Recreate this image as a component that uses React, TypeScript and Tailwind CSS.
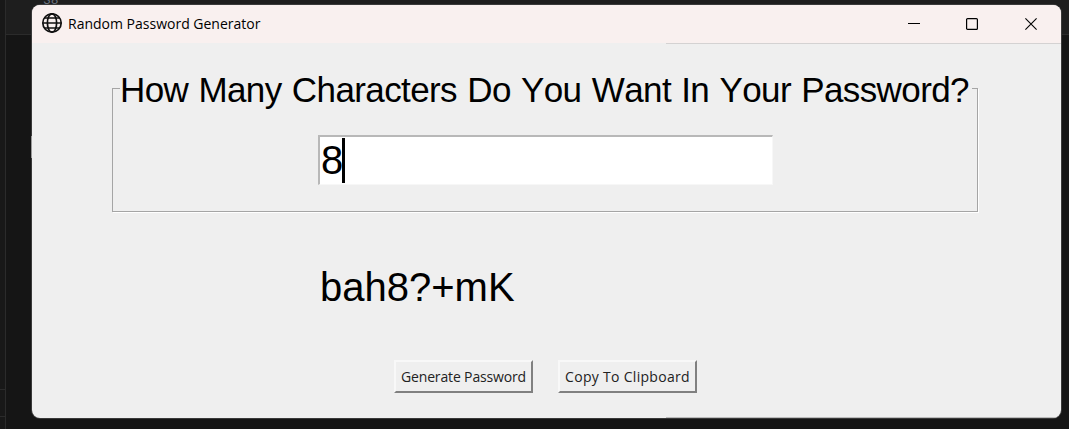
import type { ReactNode } from "react";

function GlobeIcon() {
  return (
    <svg width="22" height="22" viewBox="0 0 22 22" fill="none" stroke="#111" strokeWidth="1.7">
      <circle cx="11" cy="10" r="9.2" />
      <ellipse cx="11" cy="10" rx="4.6" ry="9.2" />
      <path d="M2 10H20M3.4 5H18.6M3.4 15H18.6" />
    </svg>
  );
}

function TitleBar() {
  return (
    <header className="flex h-[38px] shrink-0 items-center bg-[#f9f0ef] pl-[9px]">
      <GlobeIcon />
      <h1 className="mt-[-2px] ml-[5px] grow whitespace-nowrap font-['Open_Sans',sans-serif] text-[14px] text-black">
        Random Password Generator
      </h1>
      <div className="mr-[24px] flex items-center gap-[47px]">
        <svg className="mr-[-1px]" width="12" height="12" viewBox="0 0 12 12" stroke="#000" fill="none">
          <path d="M0 5.5H12" />
        </svg>
        <svg width="12" height="12" viewBox="0 0 12 12" stroke="#000" strokeWidth="1.2" fill="none">
          <rect x="0.6" y="0.6" width="10.8" height="10.8" rx="1" />
        </svg>
        <svg width="12" height="12" viewBox="0 0 12 12" stroke="#000" strokeWidth="1.1" fill="none">
          <path d="M0.4 0.4L11.6 11.6M11.6 0.4L0.4 11.6" />
        </svg>
      </div>
    </header>
  );
}

function PushButton({ children }: { children: ReactNode }) {
  return (
    <button className="flex h-[33px] w-[139px] items-center justify-center border-2 border-t-[#f8f8f8] border-r-[#808080] border-b-[#808080] border-l-[#f8f8f8] bg-[#efefef] whitespace-nowrap font-['Open_Sans',sans-serif] text-[14px] text-[#222]">
      {children}
    </button>
  );
}

export default function App() {
  return (
    <div className="relative h-[429px] w-[1069px] overflow-hidden bg-[#151515] pt-[5px] pl-[32px]">
      <div className="absolute inset-x-0 top-0 h-[35px] border-b border-[#2b2b2b] bg-[#1e1e1e]" />
      <div className="absolute top-0 left-0 h-full w-[6px] border-r border-[#2b2b2b] bg-[#181818]" />
      <div className="absolute top-[389px] left-0 h-[28px] w-[5px] border-y border-[#2b2b2b]" />
      <div className="absolute top-[-7px] left-[43px] font-['Liberation_Mono',monospace] text-[13px] leading-[15px] text-[#6e7681]">38</div>
      <div className="absolute top-[136px] left-[31px] z-10 h-[22px] w-px bg-[#999]" />

      <main className="relative flex h-[413px] w-[1029px] flex-col overflow-hidden rounded-[8px] bg-[#efefef] text-black shadow-[0_0_0_1px_#3a3a3a]">
        <TitleBar />
        <div className="ml-[634px] h-px shrink-0 bg-[#d4d2d2]" />
        <section className="mt-[44px] ml-[80px] h-[124px] w-[866px] shrink-0 border border-[#a5a5a5] shadow-[1px_1px_0_#fff]">
          <div className="mt-[-19px] ml-[7px] h-[40px] w-[852px] bg-[#efefef] whitespace-nowrap font-['Liberation_Sans',Arial,sans-serif] text-[35px] leading-[40px] tracking-[-0.6px] [font-kerning:none] [word-spacing:1.1px]">
            How Many Characters Do You Want In Your Password?
          </div>
          <div className="mt-[25px] ml-[205px] flex h-[50px] w-[455px] items-center border-t-2 border-r border-b border-l-2 border-t-[#b8b8b8] border-r-[#f7f7f7] border-b-[#f7f7f7] border-l-[#b8b8b8] bg-white font-['Liberation_Sans',Arial,sans-serif] text-[40px] leading-[46px]">
            <span className="mt-[-2px] ml-px w-[21px]">8</span>
            <span className="h-[45px] w-[2.5px] bg-black" />
          </div>
        </section>
        <output className="mt-[52px] ml-[288px] block h-[46px] shrink-0 whitespace-nowrap font-['Liberation_Sans',Arial,sans-serif] text-[40px] leading-[46px]">
          bah8?+mK
        </output>
        <div className="mt-[50px] ml-[362px] flex gap-[25px]">
          <PushButton>
            <span className="tracking-[-0.15px]">Generate Password</span>
          </PushButton>
          <PushButton>
            <span className="tracking-[0.3px]">Copy To Clipboard</span>
          </PushButton>
        </div>
        <div className="mt-auto ml-[634px] h-px shrink-0 bg-[#bbb]" />
      </main>
    </div>
  );
}
